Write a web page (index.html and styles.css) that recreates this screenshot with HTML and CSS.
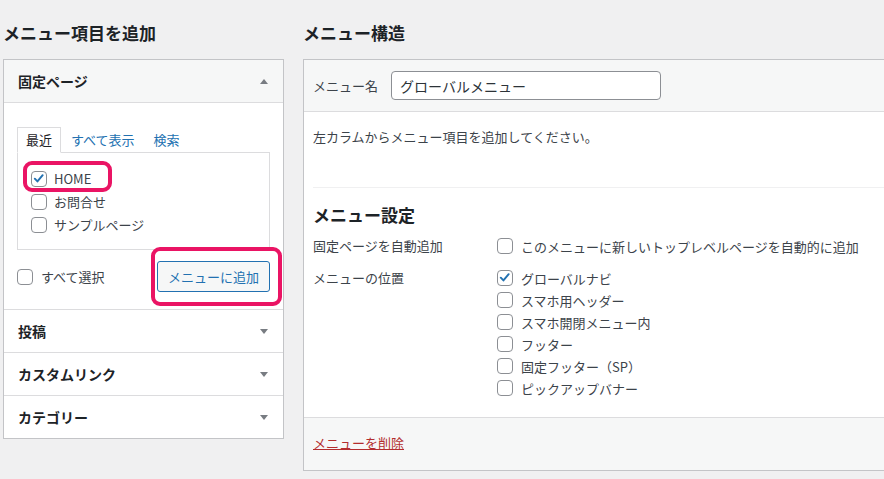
FILE: index.html
```html
<!DOCTYPE html>
<html lang="ja">
<head>
<meta charset="utf-8">
<title>メニュー</title>
<link rel="stylesheet" href="styles.css">
</head>
<body>
<div class="page">
  <div class="col-left">
    <h2 class="col-title">メニュー項目を追加</h2>
    <div class="acc">
      <div class="acc-head acc-head--open"><span>固定ページ</span><i class="arrow arrow--up"></i></div>
      <div class="acc-body">
        <ul class="tabs">
          <li class="tab">最近</li>
          <li class="tab-link">すべて表示</li>
          <li class="tab-link">検索</li>
        </ul>
        <div class="tab-panel">
          <label class="item item--list"><span class="cb"><svg viewBox="0 0 16 16" width="14" height="14"><path d="M3.2 7.6 L6.2 10.8 L12.2 3.6" fill="none" stroke="#2271b1" stroke-width="2.2" stroke-linecap="round" stroke-linejoin="round"/></svg></span>HOME<span class="mark mark--home"></span></label>
          <label class="item item--list"><span class="cb"></span>お問合せ</label>
          <label class="item item--list"><span class="cb"></span>サンプルページ</label>
        </div>
        <div class="actions">
          <label class="item"><span class="cb"></span>すべて選択</label>
          <button class="btn">メニューに追加<span class="mark mark--btn"></span></button>
        </div>
      </div>
      <div class="acc-head"><span>投稿</span><i class="arrow"></i></div>
      <div class="acc-head"><span>カスタムリンク</span><i class="arrow"></i></div>
      <div class="acc-head"><span>カテゴリー</span><i class="arrow"></i></div>
    </div>
  </div>

  <div class="col-right">
    <h2 class="col-title">メニュー構造</h2>
    <div class="menu-box">
      <div class="menu-head">
        <label class="name-label">メニュー名</label>
        <input class="name-input" type="text" value="グローバルメニュー">
      </div>
      <div class="menu-body">
        <p class="intro">左カラムからメニュー項目を追加してください。</p>
        <div class="settings">
          <h3 class="settings-title">メニュー設定</h3>
          <div class="set-row">
            <div class="set-label">固定ページを自動追加</div>
            <div class="set-ctrl">
              <label class="item"><span class="cb"></span>このメニューに新しいトップレベルページを自動的に追加</label>
            </div>
          </div>
          <div class="set-row set-row--loc">
            <div class="set-label">メニューの位置</div>
            <div class="set-ctrl">
              <label class="item"><span class="cb"><svg viewBox="0 0 16 16" width="14" height="14"><path d="M3.2 7.6 L6.2 10.8 L12.2 3.6" fill="none" stroke="#2271b1" stroke-width="2.2" stroke-linecap="round" stroke-linejoin="round"/></svg></span>グローバルナビ</label>
              <label class="item"><span class="cb"></span>スマホ用ヘッダー</label>
              <label class="item"><span class="cb"></span>スマホ開閉メニュー内</label>
              <label class="item"><span class="cb"></span>フッター</label>
              <label class="item"><span class="cb"></span>固定フッター（SP）</label>
              <label class="item"><span class="cb"></span>ピックアップバナー</label>
            </div>
          </div>
        </div>
      </div>
      <div class="menu-foot"><a class="delete-link" href="#">メニューを削除</a></div>
    </div>
  </div>
</div>
</body>
</html>
```

FILE: styles.css
```css
html, body {
  margin: 0;
  background: #f0f0f1;
  overflow: hidden;
}
body {
  font-family: "Noto Sans CJK JP", "Noto Sans", sans-serif;
  font-size: 13px;
  color: #3c434a;
}
.page {
  display: flex;
  align-items: flex-start;
  gap: 19px;
  padding: 20px 0 0 3px;
}
.col-left {
  width: 281px;
  flex: none;
}
.col-right {
  flex: 1;
  min-width: 0;
}
.col-title {
  margin: 0 0 13px;
  font-size: 17px;
  line-height: 26px;
  font-weight: 700;
  color: #1d2327;
}

/* left accordion */
.acc {
  background: #fff;
  border: 1px solid #c3c4c7;
}
.acc > * + * {
  border-top: 1px solid #dcdcde;
}
.acc-head {
  display: flex;
  align-items: center;
  justify-content: space-between;
  height: 42px;
  padding: 0 15px 0 14px;
  font-size: 14px;
  font-weight: 700;
  color: #1d2327;
}
.acc-head--open {
  background: #f6f7f7;
}
.arrow {
  width: 0;
  height: 0;
  border-left: 4px solid transparent;
  border-right: 4px solid transparent;
  border-top: 5px solid #787c82;
}
.arrow--up {
  border-top: 0;
  border-bottom: 5px solid #787c82;
}
.acc-body {
  padding: 24px 13px 17px;
}
.tabs {
  display: flex;
  margin: 0;
  padding: 0;
  list-style: none;
  position: relative;
  z-index: 1;
}
.tab {
  border: 1px solid #dcdcde;
  border-bottom-color: #fff;
  background: #fff;
  padding: 0 8px;
  line-height: 24px;
  color: #1d2327;
}
.tab-link {
  padding: 0 9px 0 10px;
  line-height: 24px;
  margin-top: 1px;
  color: #2271b1;
}
.tab-panel {
  margin-top: -1px;
  border: 1px solid #dcdcde;
  padding: 14px 13px 13px;
}
.item {
  display: flex;
  align-items: center;
  gap: 8px;
  height: 22px;
  position: relative;
}
.item--list {
  gap: 7px;
  height: 23px;
}
.cb {
  width: 16px;
  height: 16px;
  box-sizing: border-box;
  border: 1px solid #8c8f94;
  border-radius: 4px;
  background: #fff;
  flex: none;
  display: inline-flex;
  align-items: center;
  justify-content: center;
}
.actions {
  display: flex;
  align-items: center;
  justify-content: space-between;
  margin-top: 11px;
}
.btn {
  position: relative;
  height: 31px;
  box-sizing: border-box;
  padding: 0 10px;
  border: 1px solid #2271b1;
  border-radius: 3px;
  background: #f6f7f7;
  color: #2271b1;
  font-family: inherit;
  font-size: 13px;
  line-height: 29px;
}
.mark {
  position: absolute;
  box-sizing: border-box;
  border: 4px solid #ea1464;
  border-radius: 9px;
  pointer-events: none;
}
.mark--home {
  left: -8px;
  top: -6px;
  width: 89px;
  height: 31px;
}
.mark--btn {
  left: -7px;
  top: -15px;
  width: 131px;
  height: 59px;
}

/* right menu box */
.menu-box {
  background: #fff;
  border: 1px solid #c3c4c7;
  border-right: none;
}
.menu-head {
  display: flex;
  align-items: center;
  gap: 13px;
  padding: 11px 9px;
  background: #f6f7f7;
  border-bottom: 1px solid #dcdcde;
}
.name-label {
  line-height: 20px;
}
.name-input {
  width: 270px;
  height: 29px;
  box-sizing: border-box;
  padding: 0 8px;
  border: 1px solid #8c8f94;
  border-radius: 4px;
  background: #fff;
  font-family: inherit;
  font-size: 14px;
  color: #2c3338;
}
.menu-body {
  padding: 15px 0 18px 9px;
}
.intro {
  margin: 0;
  line-height: 20px;
}
.settings {
  margin-top: 40px;
  border-top: 1px solid #f0f0f1;
}
.settings-title {
  margin: 15px 0 0;
  font-size: 17px;
  line-height: 24px;
  font-weight: 700;
  color: #1d2327;
}
.set-row {
  display: flex;
  margin-top: 8px;
}
.set-row--loc {
  margin-top: 10px;
}
.set-label {
  width: 184px;
  flex: none;
  line-height: 22px;
}
.menu-foot {
  background: #f6f7f7;
  border-top: 1px solid #dcdcde;
  padding: 15px 9px 17px;
  line-height: 20px;
}
.delete-link {
  color: #b32d2e;
  text-decoration: underline;
}
```
